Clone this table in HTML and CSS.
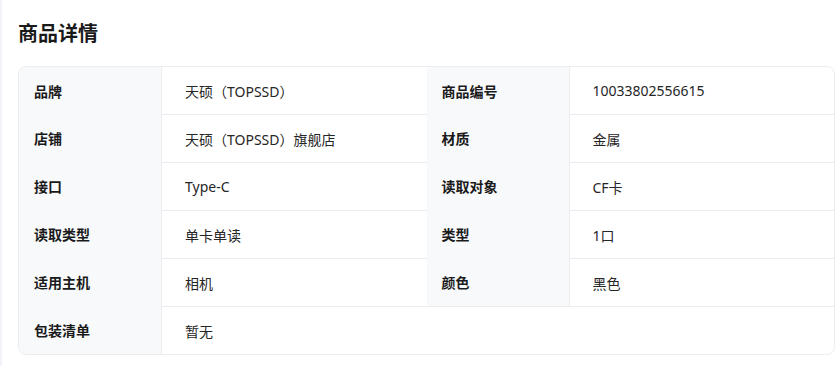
FILE: index.html
```html
<!DOCTYPE html>
<html lang="zh-CN">
<head>
<meta charset="utf-8">
<title>商品详情</title>
<link rel="stylesheet" href="styles.css">
</head>
<body>
<div class="page">
  <h2 class="title">商品详情</h2>
  <div class="spec">
    <div class="label">品牌</div><div class="value">天硕（TOPSSD）</div>
    <div class="label">商品编号</div><div class="value">10033802556615</div>

    <div class="label">店铺</div><div class="value bt">天硕（TOPSSD）旗舰店</div>
    <div class="label">材质</div><div class="value bt">金属</div>

    <div class="label">接口</div><div class="value bt">Type-C</div>
    <div class="label">读取对象</div><div class="value bt">CF卡</div>

    <div class="label">读取类型</div><div class="value bt">单卡单读</div>
    <div class="label">类型</div><div class="value bt">1口</div>

    <div class="label">适用主机</div><div class="value bt">相机</div>
    <div class="label">颜色</div><div class="value bt">黑色</div>

    <div class="label last">包装清单</div><div class="value bt wide">暂无</div>
  </div>
</div>
</body>
</html>
```
FILE: styles.css
```css
html, body {
  margin: 0;
  padding: 0;
  background: #ffffff;
}

body {
  font-family: "Noto Sans", "Noto Sans CJK SC", sans-serif;
  color: #1f2329;
}

.page {
  box-sizing: border-box;
  width: 839px;
  height: 366px;
  border-left: 2px solid #f2f3f8;
  padding: 20px 4px 0 16px;
}

.title {
  margin: 0 0 18px 0;
  font-size: 20px;
  line-height: 28px;
  font-weight: 700;
  color: #1a1a1a;
}

.spec {
  display: grid;
  grid-template-columns: 143px 1fr 143px 1fr;
  grid-template-rows: 47px repeat(5, 48px);
  border: 1px solid #ebedf0;
  border-radius: 8px;
  overflow: hidden;
}

.label {
  box-sizing: border-box;
  display: flex;
  align-items: center;
  padding-left: 15px;
  background: #f8f9fb;
  border-right: 1px solid #ebedf0;
  font-size: 14px;
  font-weight: 700;
  color: #1a1a1a;
}

.value {
  box-sizing: border-box;
  display: flex;
  align-items: center;
  padding-left: 23px;
  font-size: 14px;
  color: #262626;
}

.bt {
  border-top: 1px solid #ebedf0;
}

.wide {
  grid-column: span 3;
}
```
